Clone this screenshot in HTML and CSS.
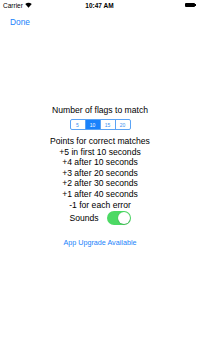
FILE: index.html
```html
<!DOCTYPE html>
<html>
<head>
<meta charset="utf-8">
<link rel="stylesheet" href="styles.css">
</head>
<body>
<div class="screen">
  <div class="status">
    <div class="status-left">
      <span class="carrier">Carrier</span>
      <svg class="wifi" width="7" height="6" viewBox="0 0 14 11">
        <path d="M7 11 L0.5 3.6 A10 10 0 0 1 13.5 3.6 Z" fill="#000"/>
      </svg>
    </div>
    <div class="time">10:47 AM</div>
    <div class="status-right">
      <div class="battery"></div>
      <div class="battery-tip"></div>
    </div>
  </div>
  <div class="nav">
    <span class="done">Done</span>
  </div>
  <div class="content">
    <div class="label">Number of flags to match</div>
    <div class="segmented">
      <div class="seg">5</div>
      <div class="seg active">10</div>
      <div class="seg">15</div>
      <div class="seg">20</div>
    </div>
    <div class="points">
      <div>Points for correct matches</div>
      <div>+5 in first 10 seconds</div>
      <div>+4 after 10 seconds</div>
      <div>+3 after 20 seconds</div>
      <div>+2 after 30 seconds</div>
      <div>+1 after 40 seconds</div>
      <div>-1 for each error</div>
    </div>
    <div class="sounds">
      <span>Sounds</span>
      <div class="toggle"><div class="knob"></div></div>
    </div>
    <div class="upgrade">App Upgrade Available</div>
  </div>
</div>
</body>
</html>
```

FILE: styles.css
```css
html, body {
  margin: 0;
  padding: 0;
  background: #fff;
}
body {
  font-family: "Liberation Sans", Arial, sans-serif;
  color: #000;
}
.screen {
  width: 200px;
  height: 355px;
  display: flex;
  flex-direction: column;
}
.status {
  height: 10px;
  display: flex;
  align-items: center;
  justify-content: space-between;
  padding: 0 4px 0 3px;
  font-size: 6.5px;
}
.status-left {
  display: flex;
  align-items: center;
  gap: 2px;
  width: 40px;
}
.time {
  font-weight: bold;
  font-size: 6.5px;
}
.status-right {
  display: flex;
  align-items: center;
  justify-content: flex-end;
  width: 40px;
}
.battery {
  width: 10px;
  height: 4px;
  background: #000;
  border-radius: 1px;
}
.battery-tip {
  width: 1px;
  height: 2px;
  background: #000;
}
.nav {
  height: 23px;
  display: flex;
  align-items: center;
  padding-left: 10px;
}
.done {
  color: #1a82fb;
  font-size: 8.4px;
}
.content {
  display: flex;
  flex-direction: column;
  align-items: center;
  padding-top: 72px;
}
.label {
  font-size: 8.6px;
  line-height: 11px;
}
.segmented {
  display: flex;
  margin-top: 3px;
  border: 1px solid #5aa3f5;
  border-radius: 2px;
  overflow: hidden;
}
.seg {
  width: 14px;
  height: 9px;
  font-size: 5px;
  color: #3b8ff0;
  display: flex;
  align-items: center;
  justify-content: center;
  border-left: 0.5px solid #5aa3f5;
}
.seg:first-child {
  border-left: none;
}
.seg.active {
  background: #1a82fb;
  color: #fff;
}
.points {
  margin-top: 6px;
  font-size: 8.6px;
  line-height: 10.6px;
  text-align: center;
}
.sounds {
  display: flex;
  align-items: center;
  gap: 8px;
  margin-top: 1px;
  font-size: 8.6px;
}
.toggle {
  width: 24px;
  height: 14px;
  border-radius: 7px;
  background: #4cd964;
  position: relative;
}
.knob {
  position: absolute;
  right: 1px;
  top: 1px;
  width: 12px;
  height: 12px;
  border-radius: 50%;
  background: #fff;
  box-shadow: 0 0.5px 1px rgba(0,0,0,0.3);
}
.upgrade {
  margin-top: 13px;
  color: #1a82fb;
  font-size: 7.2px;
}
```
